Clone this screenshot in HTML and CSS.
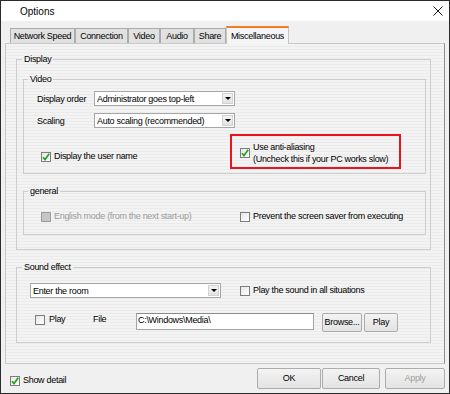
FILE: index.html
```html
<!DOCTYPE html>
<html>
<head>
<meta charset="utf-8">
<title>Options</title>
<link rel="stylesheet" href="styles.css">
</head>
<body>
<div class="window">
  <div class="titlebar">
    <span class="title">Options</span>
    <svg class="close" width="10" height="10" viewBox="0 0 10 10"><path d="M0.5 0.5L9.5 9.5M9.5 0.5L0.5 9.5" stroke="#1a1a1a" stroke-width="1" fill="none"/></svg>
  </div>
  <div class="client">
    <div class="tabs">
      <div class="tab t-net">Network Speed</div>
      <div class="tab t-conn">Connection</div>
      <div class="tab t-video">Video</div>
      <div class="tab t-audio">Audio</div>
      <div class="tab t-share">Share</div>
      <div class="tab active t-misc">Miscellaneous</div>
    </div>
    <div class="panel">
      <fieldset class="group g-display">
        <legend>Display</legend>
        <div class="display-body">
          <fieldset class="group g-video">
            <legend>Video</legend>
            <div class="video-body">
              <div class="field-row">
                <span class="field-label">Display order</span>
                <div class="combo combo-video"><span class="combo-text">Administrator goes top-left</span><span class="combo-btn"><i class="tri"></i></span></div>
              </div>
              <div class="field-row row-scaling">
                <span class="field-label">Scaling</span>
                <div class="combo combo-video"><span class="combo-text">Auto scaling (recommended)</span><span class="combo-btn"><i class="tri"></i></span></div>
              </div>
              <div class="check-row">
                <label class="check user-name"><span class="cb checked"><svg width="8" height="8" viewBox="0 0 8 8"><path d="M1 4.2L3 6.6L7.2 0.8" stroke="#23a21d" stroke-width="1.7" fill="none"/></svg></span><span>Display the user name</span></label>
                <div class="highlight">
                  <label class="check"><span class="cb checked"><svg width="8" height="8" viewBox="0 0 8 8"><path d="M1 4.2L3 6.6L7.2 0.8" stroke="#23a21d" stroke-width="1.7" fill="none"/></svg></span><span class="two-line">Use anti-aliasing<br>(Uncheck this if your PC works slow)</span></label>
                </div>
              </div>
            </div>
          </fieldset>
          <fieldset class="group g-general">
            <legend>general</legend>
            <div class="general-body">
              <label class="check english disabled"><span class="cb"></span><span>English mode (from the next start-up)</span></label>
              <label class="check"><span class="cb"></span><span>Prevent the screen saver from executing</span></label>
            </div>
          </fieldset>
        </div>
      </fieldset>
      <fieldset class="group g-sound">
        <legend>Sound effect</legend>
        <div class="sound-body">
          <div class="sound-row">
            <div class="combo combo-sound"><span class="combo-text">Enter the room</span><span class="combo-btn"><i class="tri"></i></span></div>
            <label class="check play-all"><span class="cb"></span><span>Play the sound in all situations</span></label>
          </div>
          <div class="sound-row file-row">
            <label class="check play-check"><span class="cb"></span><span>Play</span></label>
            <span class="file-label">File</span>
            <div class="textbox">C:\Windows\Media\</div>
            <button class="btn btn-browse">Browse...</button>
            <button class="btn btn-play">Play</button>
          </div>
        </div>
      </fieldset>
    </div>
    <div class="bottombar">
      <label class="check show-detail"><span class="cb checked"><svg width="8" height="8" viewBox="0 0 8 8"><path d="M1 4.2L3 6.6L7.2 0.8" stroke="#23a21d" stroke-width="1.7" fill="none"/></svg></span><span>Show detail</span></label>
      <div class="actions">
        <button class="btn btn-ok">OK</button>
        <button class="btn btn-cancel">Cancel</button>
        <button class="btn btn-apply" disabled>Apply</button>
      </div>
    </div>
  </div>
</div>
</body>
</html>
```
FILE: styles.css
```css
* { box-sizing: border-box; }
html, body { margin: 0; padding: 0; }
body {
  width: 450px;
  height: 394px;
  background: #fff;
  font-family: "Liberation Sans", Arial, sans-serif;
  font-size: 9px;
  letter-spacing: -0.3px;
  color: #000;
}
.window {
  width: 450px;
  height: 394px;
  border: 1px solid #2b2b2b;
  background: #f0f0f0;
  display: flex;
  flex-direction: column;
}
.titlebar {
  height: 20px;
  flex: none;
  background: #fff;
  display: flex;
  align-items: center;
  justify-content: space-between;
  padding: 0 6px 0 19px;
}
.title { font-size: 10px; letter-spacing: 0; }
.close { display: block; }
.client {
  flex: 1;
  display: flex;
  flex-direction: column;
  padding: 5px 4px 0 4px;
}
.tabs {
  display: flex;
  align-items: flex-end;
  height: 17px;
  margin-left: 5px;
  flex: none;
}
.tab {
  height: 15px;
  border: 1px solid #acacac;
  border-bottom: none;
  background: #e1e1e1;
  display: flex;
  align-items: center;
  justify-content: center;
  line-height: 12px;
  white-space: nowrap;
}
.tab.active {
  height: 18px;
  margin-bottom: -1px;
  background: #f5f5f5;
  border-color: #c4c4c4;
  border-top: 2px solid #f47b20;
  position: relative;
  z-index: 1;
  padding-bottom: 1px;
}
.t-net { width: 65px; }
.t-conn { width: 53px; }
.t-video { width: 32px; }
.t-audio { width: 34px; }
.t-share { width: 32px; }
.t-misc { width: 63px; }
.panel {
  width: 440px;
  height: 321px;
  flex: none;
  border: 1px solid #c8c8c8;
  border-right-color: #8f8f8f;
  background: repeating-linear-gradient(180deg, #f3f3f3 0, #f3f3f3 2px, #ebebeb 2px, #ebebeb 3px);
  padding: 10px 0 0 10px;
}
fieldset.group {
  margin: 0;
  padding: 0;
  min-width: 0;
  border: 1px solid #cdcdcd;
}
fieldset.group legend {
  padding: 0 2px;
  margin-left: 5px;
  line-height: 11px;
}
fieldset.g-video legend, fieldset.g-general legend { margin-left: 4px; }
.g-display { width: 415px; }
.display-body {
  display: flex;
  flex-direction: column;
  gap: 12px;
  padding: 9px 0 14px 6px;
}
.g-video, .g-general { width: 403px; }
.video-body { padding: 6px 0 4px 13px; }
.field-row {
  display: flex;
  align-items: center;
  height: 15px;
}
.row-scaling { margin-top: 7px; }
.field-label { width: 57px; }
.combo {
  height: 15px;
  border: 1px solid #a6a6a6;
  background: #fff;
  display: flex;
  align-items: center;
  padding-left: 2px;
}
.combo-video { width: 141px; }
.combo-sound { width: 191px; }
.combo-text { flex: 1; white-space: nowrap; overflow: hidden; }
.combo-btn {
  width: 11px;
  height: 11px;
  margin-right: 1px;
  border: 1px solid #d2d2d2;
  background: linear-gradient(#f4f4f4, #e2e2e2);
  display: flex;
  align-items: center;
  justify-content: center;
}
.tri {
  width: 0;
  height: 0;
  border-left: 3px solid transparent;
  border-right: 3px solid transparent;
  border-top: 3px solid #000;
}
.check-row {
  display: flex;
  align-items: flex-end;
  margin-top: 6px;
  height: 35px;
}
.check {
  display: flex;
  align-items: center;
  gap: 3px;
  line-height: 11px;
  white-space: nowrap;
}
.cb {
  width: 10px;
  height: 10px;
  flex: none;
  border: 1px solid #7d7d7d;
  background: linear-gradient(135deg, #e6e6e6, #ffffff);
  display: flex;
  align-items: center;
  justify-content: center;
}
.cb svg { display: block; }
.user-name {
  width: 189px;
  margin-left: 4px;
  margin-bottom: 7px;
}
.highlight {
  width: 171px;
  height: 35px;
  border: 2px solid #e8141e;
  padding: 5px 0 0 8px;
}
.two-line { line-height: 12px; }
.general-body {
  display: flex;
  padding: 14px 0 12px 17px;
  height: 37px;
}
.english { width: 199px; }
.disabled { color: #9b9b9b; }
.disabled .cb {
  background: #c6c6c6;
  border-color: #9c9c9c;
}
fieldset.g-sound {
  width: 415px;
  margin-top: 12px;
}
.sound-body { padding: 10px 0 10px 13px; }
.sound-row {
  display: flex;
  align-items: center;
  height: 15px;
}
.play-all { margin-left: 19px; }
.file-row {
  align-items: flex-start;
  height: 19px;
  margin-top: 15px;
  padding-left: 5px;
}
.play-check {
  width: 58px;
  margin-top: 1px;
  gap: 4px;
}
.file-label {
  width: 43px;
  line-height: 11px;
  margin-top: 1px;
}
.textbox {
  width: 178px;
  height: 17px;
  border: 1px solid #a4a4a4;
  border-top-color: #8a8a8a;
  background: #fff;
  padding: 1px 1px;
  line-height: 11px;
  white-space: nowrap;
}
.btn {
  font-family: inherit;
  font-size: 9px;
  letter-spacing: -0.3px;
  color: #000;
  height: 19px;
  padding: 0;
  border: 1px solid #acacac;
  border-radius: 2px;
  background: linear-gradient(#f3f3f3, #e3e3e3);
  line-height: 11px;
}
.btn-browse { width: 40px; margin-left: 8px; }
.btn-play { width: 34px; margin-left: 2px; }
.bottombar {
  flex: 1;
  display: flex;
  align-items: center;
  justify-content: space-between;
  padding: 0 0 0 5px;
}
.show-detail { margin-top: 4px; }
.actions { display: flex; align-items: center; }
.actions .btn { height: 21px; }
.btn-ok { width: 64px; }
.btn-cancel { width: 58px; margin-left: 1px; }
.btn-apply { width: 60px; margin-left: 5px; color: #a0a0a0; }
```
